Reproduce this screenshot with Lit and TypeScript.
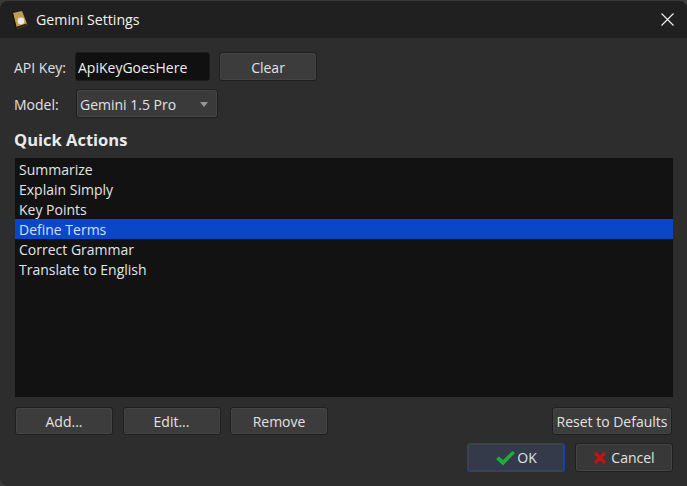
import { LitElement, html, css } from "lit";
import { customElement } from "lit/decorators.js";

@customElement("app-root")
export class AppRoot extends LitElement {
  static styles = css`
    :host { display: block; width: 687px; height: 486px; background: #3a3a3a; font-family: "Open Sans", "Noto Sans", sans-serif; font-size: 14px; color: #e2e2e2; overflow: hidden; }
    .win { height: 485px; margin-top: 1px; border-radius: 8px 8px 0 8px; background: #2d2d2d; display: flex; flex-direction: column; overflow: hidden; }
    .title { height: 37px; flex: none; background: #202020; display: flex; align-items: center; padding: 0 0 0 12px; color: #f2f2f2; font-size: 14.2px; }
    .title svg.logo { margin-right: 8px; }
    .title .name { flex: 1; }
    .close { width: 40px; display: flex; justify-content: center; }
    .body { flex: 1; display: flex; flex-direction: column; padding: 14px 14px 0 15px; }
    .row { display: flex; align-items: center; }
    .lab { width: 61px; flex: none; margin-left: -1px; padding-top: 1px; }
    .input { width: 135px; height: 29px; box-sizing: border-box; background: #101010; border: 1px solid #1c1c1c; border-radius: 3px; padding: 1px 0 0 2px; display: flex; align-items: center; color: #eee; }
    .btn { box-sizing: border-box; width: 98px; height: 28px; background: #3c3c3c; border: 1px solid #1f1f1f; border-radius: 3px; box-shadow: inset 0 0 0 1px #444; display: flex; align-items: center; justify-content: center; gap: 1px; color: #e2e2e2; }
    .clear { margin-left: 9px; height: 29px; padding-top: 1px; }
    .combo { box-sizing: border-box; width: 142px; height: 29px; margin-left: 1px; background: #3a3a3a; border: 1px solid #1f1f1f; border-radius: 3px; box-shadow: inset 0 0 0 1px #444; display: flex; align-items: center; padding: 1px 9px 0 3px; justify-content: space-between; }
    .row2 { margin-top: 8px; }
    .arrow { width: 0; height: 0; border-left: 4px solid transparent; border-right: 4px solid transparent; border-top: 5px solid #969696; }
    h2 { margin: 10px 0 6px -1px; font-size: 16.5px; line-height: 24px; font-weight: 700; color: #eaeaea; }
    .list { height: 239px; box-sizing: border-box; flex: none; background: #121212; padding-top: 1px; }
    .item { height: 20px; line-height: 21px; padding-left: 4px; color: #e4e4e4; }
    .item.sel { background: #0a46c8; color: #cfe0f5; }
    .actions { display: flex; gap: 9.5px; margin-top: 10px; }
    .actions .reset { margin-left: auto; width: 120px; margin-right: 1px; white-space: nowrap; }
    .footer { display: flex; justify-content: flex-end; gap: 10px; margin-top: 8px; }
    .footer .btn { height: 29px; }
    .ok { background: #343a4a; border: 1px solid #0f44b4; box-shadow: inset 0 0 0 1px #3c4252; }
    .cancel { background: #383838; }
    .cancel svg { margin-right: 3px; }
  `;
  render() {
    const items = ["Summarize", "Explain Simply", "Key Points", "Define Terms", "Correct Grammar", "Translate to English"];
    return html`<div class="win">
      <div class="title">
        <svg class="logo" width="16" height="20" viewBox="0 0 16 20">
          <path d="M1 3 L10 1 L15.5 15 L5 19 Z" fill="#c49a58"/>
          <path d="M1 3 L5 19 L3.5 19.5 L0 5 Z" fill="#1c1710"/>
          <circle cx="9" cy="11" r="3.4" fill="#e8e8e4"/>
          <path d="M5 16.5 L14.5 13.5 L15.5 15 L5 19 Z" fill="#2c2418"/>
        </svg>
        <span class="name">Gemini Settings</span>
        <span class="close"><svg width="13" height="13" viewBox="0 0 13 13"><path d="M.5 .5 L12.5 12.5 M12.5 .5 L.5 12.5" stroke="#f0f0f0" stroke-width="1.1"/></svg></span>
      </div>
      <div class="body">
        <div class="row">
          <span class="lab">API Key:</span>
          <div class="input">ApiKeyGoesHere</div>
          <div class="btn clear">Clear</div>
        </div>
        <div class="row row2">
          <span class="lab">Model:</span>
          <div class="combo"><span>Gemini 1.5 Pro</span><span class="arrow"></span></div>
        </div>
        <h2>Quick Actions</h2>
        <div class="list">
          ${items.map((t, i) => html`<div class="item ${i === 3 ? "sel" : ""}">${t}</div>`)}
        </div>
        <div class="actions">
          <div class="btn">Add...</div>
          <div class="btn">Edit...</div>
          <div class="btn">Remove</div>
          <div class="btn reset">Reset to Defaults</div>
        </div>
        <div class="footer">
          <div class="btn ok">
            <svg width="21" height="16" viewBox="0 0 20 16"><path d="M0.5 9 L3.5 6.5 L7.5 10 L17 1 L19.5 3 L7.5 15.5 Z" fill="#1fae3a"/></svg>
            <span>OK</span>
          </div>
          <div class="btn cancel">
            <svg width="14" height="14" viewBox="0 0 14 14"><path d="M2 2 L12 12 M12 2 L2 12" stroke="#c11414" stroke-width="3.4"/></svg>
            <span>Cancel</span>
          </div>
        </div>
      </div>
    </div>`;
  }
}
